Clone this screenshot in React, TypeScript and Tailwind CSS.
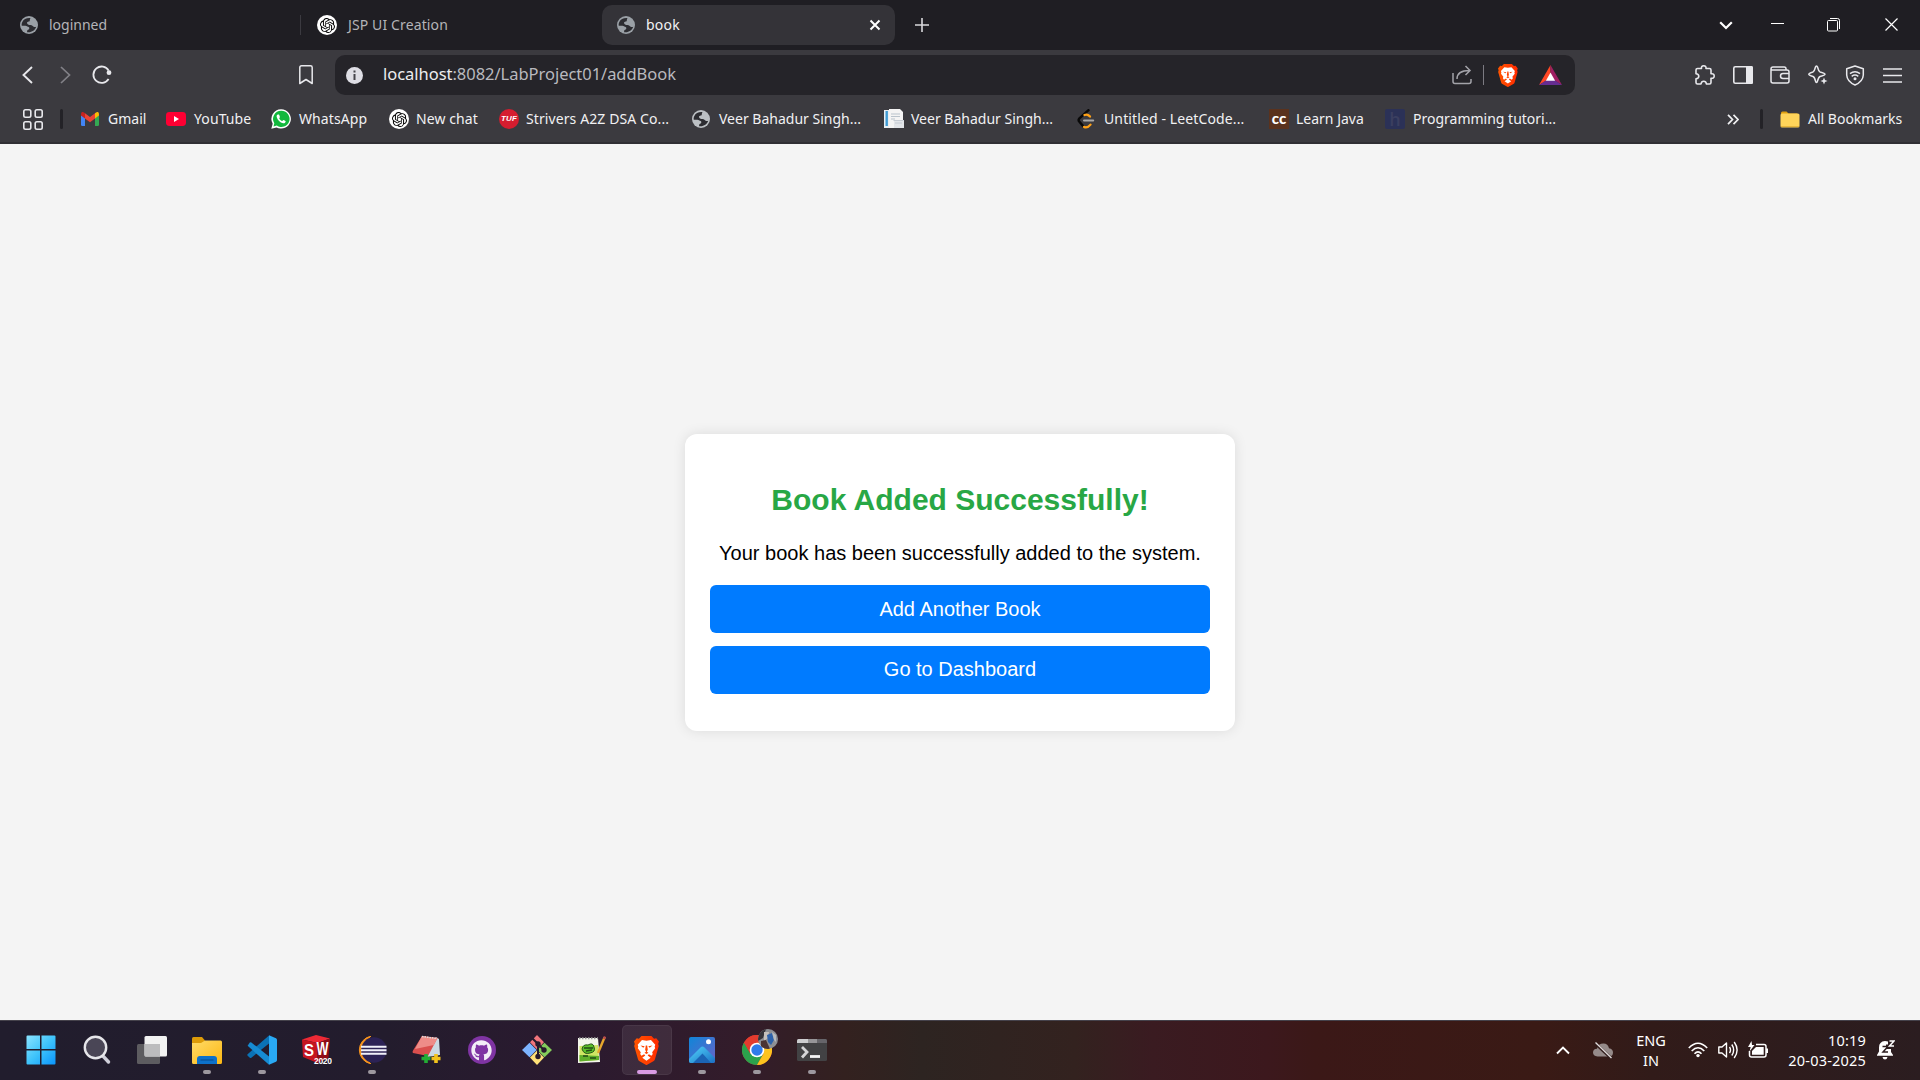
import type { ReactNode } from 'react';
import { SiOpenai } from 'react-icons/si';
import { FaGithub } from 'react-icons/fa';

const Globe = ({ color = '#9aa0a6' }: { color?: string }) => (
  <svg width="18" height="18" viewBox="0 0 18 18">
    <circle cx="9" cy="9" r="9" fill={color} />
    <path d="M10.500 2C6.600 1.700 3.600 3 2.200 6.200C1.600 7.800 1.500 8.800 1.800 9.800H5.400C7 9.800 7.600 11 9 11.200C9.800 12.400 9 13.500 8 13.700C7 14 7 15.400 7.200 16.200C11.500 16.800 15 14.400 16.200 10.800C15 11.500 13.400 10.800 12.400 9.700C11.600 8.700 9.600 9.400 8 8.500C6.400 7.400 6.800 5.800 8.600 5.600C10.600 5.400 9.200 4 10.500 2Z" fill="#2c2c31" />
  </svg>
);

const ChatIcon = () => (
  <span className="flex size-5 items-center justify-center rounded-full bg-white text-black">
    <SiOpenai size={15} />
  </span>
);

const Gmail = () => (
  <svg width="18" height="14" viewBox="0 0 18 14">
    <path d="M0 3v9.7Q0 14 1.3 14H4V6Z" fill="#4285f4" />
    <path d="M18 3v9.7Q18 14 16.7 14H14V6Z" fill="#34a853" />
    <path d="M14 1.2 15 .4Q18-1 18 2.2V3.4L14 6.5Z" fill="#fbbc04" />
    <path d="M4 1.2 3 .4Q0-1 0 2.2V3.4L4 6.5Z" fill="#c5221f" />
    <path d="M4 1.2 9 5 14 1.2V6.5L9 10.2 4 6.5Z" fill="#ea4335" />
  </svg>
);

const YouTube = () => (
  <svg width="20" height="14" viewBox="0 0 20 14">
    <rect width="20" height="14" rx="3.4" fill="#ff0033" />
    <path d="M8 4.1v5.8L13 7Z" fill="#fff" />
  </svg>
);

const WhatsApp = () => (
  <svg width="20" height="20" viewBox="0 0 20 20">
    <path d="M10.2.2a9.7 9.7 0 0 0-8.5 14.5L.3 19.8l5.2-1.4A9.7 9.7 0 1 0 10.2.2Z" fill="#fff" />
    <path d="M10.2 1.8a8.1 8.1 0 0 0-6.9 12.4l-.8 3.2 3.3-.9A8.1 8.1 0 1 0 10.2 1.8Z" fill="#12b83d" />
    <path d="M7 5.4C6 5.6 5.4 6.6 5.7 8c.8 3.2 3.4 5.6 6.4 6.2 1.4.2 2.5-.6 2.6-2 0-.3-2.1-1.4-2.4-1.2l-1 1.1c-1.4-.5-2.5-1.5-3.1-2.9l.7-.9c.2-.3-.7-2.5-.9-2.8Z" fill="#fff" />
  </svg>
);

const Tuf = () => (
  <span className="flex size-5 items-center justify-center rounded-full bg-[#d51d2f]">
    <span className="font-['Liberation_Sans',sans-serif] text-[8px] leading-none font-bold text-white italic">TUF</span>
  </span>
);

const Doc = () => (
  <svg width="20" height="20" viewBox="0 0 20 20">
    <path d="M0 1h5v18H0Z" fill="#e8eef2" />
    <path d="M1.5 2h2.4v15H1.5Z" fill="#3f9bd4" />
    <path d="M5 0h11l3 3v16H5Z" fill="#f4f4f4" />
    <path d="M7 5h9M7 7.5h9M7 10h4" stroke="#b9c3cc" />
    <path d="M10 11h10v8H10Z" fill="#e2e5e9" />
    <path d="M9.5 11.5h10M11 14h7" stroke="#c4cad2" />
  </svg>
);

const LeetCode = () => (
  <svg width="18" height="20" viewBox="0 0 18 20" fill="none" strokeLinecap="round">
    <path d="M11.5 1.2 2.2 9.5Q1 11 2.2 12.6L6.4 17.4" stroke="#080808" strokeWidth="2.4" />
    <path d="M7.5 6Q10.5 4.6 13 7.6" stroke="#ffa116" strokeWidth="2.3" />
    <path d="M7 17.9Q10.4 19.5 13.5 15.6" stroke="#ffa116" strokeWidth="2.3" />
    <path d="M7 11.6H16.2" stroke="#a9a9a9" strokeWidth="2" />
  </svg>
);

const Cc = () => (
  <span className="flex size-5 items-center justify-center bg-[#5a321d]">
    <span className="pb-[2px] font-['Lato',sans-serif] text-[15px] leading-none font-black text-white">cc</span>
  </span>
);

const Hyper = () => (
  <span className="flex size-5 items-center justify-center rounded-[2px] bg-[#2b3157]">
    <span className="font-['Open_Sans',sans-serif] text-[18px] leading-none font-semibold text-[#3b3f60]">h</span>
  </span>
);

const Folder = () => (
  <svg width="20" height="17" viewBox="0 0 20 17">
    <path d="M1 2Q1 .5 2.5.5H6.5L8.5 2.5H17V6H1Z" fill="#e0a010" />
    <rect x="0.5" y="2.5" width="19" height="14" rx="1.6" fill="#ffd45a" />
    <path d="M1 15.5H19" stroke="#e7b53a" />
  </svg>
);

const Triangle = () => (
  <svg width="23" height="20" viewBox="0 0 23 20">
    <path d="M11.5 0 0 20 11.5 13Z" fill="#ff4724" />
    <path d="M11.5 0 23 20 11.5 13Z" fill="#9e1f63" />
    <path d="M0 20H23L11.5 12.5Z" fill="#662d91" />
    <path d="M11.5 7.6 6.9 15.7H16.1Z" fill="#fff" />
  </svg>
);

const Lion = ({ h, id }: { h: number; id: string }) => (
  <svg height={h} width={h * 0.86} viewBox="0 0 25 29">
    <defs>
      <linearGradient id={id} x1="0" x2="1">
        <stop offset="0" stopColor="#ff5500" />
        <stop offset="1" stopColor="#ff2a00" />
      </linearGradient>
    </defs>
    <path d="M7.5 0h10l2.6 2.6 2.2-.3L25 5.6l-.8 2.4.6 2-3.8 13.2q-.4 1.3-1.6 2L12.5 29.2 5.6 25.2Q4.4 24.500 4 23.200L.2 10l.6-2L0 5.600 2.700 2.300l2.200.3Z" fill={`url(#${id})`} />
    <path d="M12.500 4.800 17 4l4.300 4.800-.6 2 .5 1.500-3 3.900 .6 1.800-1.300 1.800-2.600-1.500-1.200 1.200 3 2.200-4.200 3-4.200-3 3-2.200-1.200-1.200-2.600 1.500-1.300-1.800.6-1.800-3-3.900.5-1.500-.6-2L8 4Z" fill="#fff" />
    <path d="M6.500 9.600 10.700 10.300 9.300 11.700ZM18.500 9.600 14.300 10.300 15.700 11.700ZM11.800 9.500h1.400l.6 4.300-.9 2 1.600 1-2 1.100-2-1.100 1.600-1-.9-2Z" fill="#ff4500" />
  </svg>
);

const bookmarks: { label: string; icon: ReactNode; slot: string }[] = [
  { label: 'Gmail', icon: <Gmail />, slot: 'w-[86px] gap-2' },
  { label: 'YouTube', icon: <YouTube />, slot: 'w-[105px] gap-2 tracking-[0.1px]' },
  { label: 'WhatsApp', icon: <WhatsApp />, slot: 'w-[118px] gap-2 tracking-[0.1px]' },
  { label: 'New chat', icon: <ChatIcon />, slot: 'w-[110px] gap-[7px] tracking-[0.1px]' },
  { label: 'Strivers A2Z DSA Co...', icon: <Tuf />, slot: 'w-[192px] gap-[7px] tracking-[0.1px]' },
  { label: 'Veer Bahadur Singh...', icon: <Globe color="#bcc0c4" />, slot: 'w-[193px] gap-2' },
  { label: 'Veer Bahadur Singh...', icon: <Doc />, slot: 'w-[192px] gap-[7px]' },
  { label: 'Untitled - LeetCode...', icon: <LeetCode />, slot: 'w-[193px] gap-2 tracking-[0.12px]' },
  { label: 'Learn Java', icon: <Cc />, slot: 'w-[116px] gap-[7px]' },
  { label: 'Programming tutori...', icon: <Hyper />, slot: 'w-[180px] gap-2' },
];

const TabStrip = () => (
  <header className="flex h-[50px] items-center bg-[#1f1e23] text-[14px] text-[#b4b4b8]">
    <div className="flex w-[300px] items-center gap-[11px] pl-5"><Globe /><span className="pb-[2px]">loginned</span></div>
    <div className="h-5 w-px bg-[#3b3a40]" />
    <div className="flex w-[301px] items-center gap-[11px] pl-4"><ChatIcon /><span className="pb-[2px] tracking-[0.12px]">JSP UI Creation</span></div>
    <div className="flex h-10 w-[293px] items-center rounded-[10px] bg-[#343338] pr-[14px] pl-[15px] text-[#f2f2f4]">
      <Globe />
      <span className="ml-[11px] flex-1 pb-[2px] tracking-[0.2px]">book</span>
      <svg width="12" height="12" viewBox="0 0 12 12"><path d="M1.500 1.500 10.500 10.500M10.500 1.500 1.500 10.500" stroke="#fff" strokeWidth="2" /></svg>
    </div>
    <svg className="ml-5" width="14" height="14" viewBox="0 0 14 14"><path d="M7 0V14M0 7H14" stroke="#d9d9dc" strokeWidth="1.600" /></svg>
    <div className="ml-auto flex items-center">
      <svg className="mr-[38px]" width="14" height="9" viewBox="0 0 14 9"><path d="M1.200 1.200 7 7 12.800 1.200" fill="none" stroke="#fff" strokeWidth="2.200" /></svg>
      <svg className="mr-[43px]" width="13" height="14" viewBox="0 0 13 14"><path d="M0 5.500H13" stroke="#fff" /></svg>
      <svg className="mr-[45px]" width="13" height="14" viewBox="0 0 13 14" fill="none" stroke="#fff"><rect x=".5" y="2.500" width="10" height="10.500" rx="1" /><path d="M3 .5H10.500Q12.500 .5 12.500 2.500V11" /></svg>
      <svg className="mr-[22px] mb-px" width="13" height="13" viewBox="0 0 13 13"><path d="M.5.5 12.500 12.500M12.500.5.5 12.500" stroke="#fff" strokeWidth="1.200" /></svg>
    </div>
  </header>
);

const Toolbar = () => (
  <div className="flex h-[50px] items-center text-[#e8e8ec]">
    <svg className="ml-[22px]" width="11" height="18" viewBox="0 0 11 18" fill="none" stroke="currentColor" strokeWidth="1.900"><path d="M10 1 1.500 9 10 17" /></svg>
    <svg className="ml-[27px]" width="11" height="18" viewBox="0 0 11 18" fill="none" stroke="#828187" strokeWidth="1.700"><path d="M1 1 9.500 9 1 17" /></svg>
    <svg className="ml-[21px]" width="20" height="20" viewBox="0 0 20 20" fill="none" stroke="currentColor" strokeWidth="1.800"><path d="M16.600 14A8.200 8.200 0 1 1 16.700 5.600" /><circle cx="17" cy="7.700" r="2.400" fill="currentColor" stroke="none" /></svg>
    <svg className="ml-[187px]" width="14" height="20" viewBox="0 0 14 20" fill="none" stroke="currentColor" strokeWidth="1.500"><path d="M.8 2.500Q.8.800 2.500.800H11.500Q13.200.800 13.200 2.500V18.500L7 14.500.8 18.500Z" strokeLinejoin="round" /></svg>
    <div className="ml-[22px] flex h-10 w-[1240px] items-center rounded-[10px] bg-[#252429]">
      <svg className="ml-[11px]" width="17" height="17" viewBox="0 0 17 17"><circle cx="8.500" cy="8.500" r="8.500" fill="#dedee5" /><path d="M8.500 3.500V5.500M8.500 7V13" stroke="#45444b" strokeWidth="2" /></svg>
      <span className="ml-[20px] flex-1 pb-px text-[16.5px] tracking-[-0.03px] text-[#b9b9be]"><span className="text-[#ededf0]">localhost</span>:8082/LabProject01/addBook</span>
      <svg width="20" height="20" viewBox="0 0 20 20" fill="none" stroke="#a3a3a9" strokeWidth="1.500"><path d="M1 8V16.500Q1 18.500 3 18.500H17Q19 18.500 19 16.500V14M5 14Q5 5.500 17.500 5.500M13.500 1 18 5.500 13.500 10" /></svg>
      <div className="ml-[11px] h-5 w-px bg-[#7c7b82]" />
      <span className="ml-[14px]"><Lion h={23} id="lion-small" /></span>
      <span className="mr-[13px] ml-[21px]"><Triangle /></span>
    </div>
    <div className="mr-[18px] ml-auto flex items-center gap-[17.6px]">
      <svg width="20" height="20" viewBox="0 0 20 20" fill="none" stroke="currentColor" strokeWidth="1.600" strokeLinejoin="round"><path d="M1 5Q1 3.500 2.500 3.500H6.500Q6 .8 8.700 .8T11 3.500H14.500Q16 3.500 16 5V8.800Q19.200 8.300 19.200 11T16 13.200V17.500Q16 19 14.500 19H11.500Q11 16.200 8.700 16.200T6 19H2.500Q1 19 1 17.500V13.800Q3.800 13.500 3.800 11.200T1 8.700Z" /></svg>
      <svg width="20" height="18" viewBox="0 0 20 18"><rect x=".8" y=".8" width="18.400" height="16.400" rx="1.500" fill="none" stroke="currentColor" strokeWidth="1.600" /><path d="M13 0H18.500Q20 0 20 1.500V16.500Q20 18 18.500 18H13Z" fill="currentColor" /></svg>
      <svg width="20" height="18" viewBox="0 0 20 18" fill="none" stroke="currentColor" strokeWidth="1.500"><path d="M16 4V2.800Q16 1 14.200 1H3Q1 1 1 3V15Q1 17 3 17H17Q19 17 19 15V6Q19 4 17 4H3Q1 4 1 3M19 7.500H13Q10.500 7.500 10.500 10T13 12.500H19" /></svg>
      <svg width="20" height="20" viewBox="0 0 20 20" fill="none" stroke="currentColor" strokeWidth="1.500" strokeLinejoin="round"><path d="M8.500 1Q9.200 1 9.500 2Q10.500 6 12 7Q17 8.500 17 9.200T12 11.500Q10.700 12 9.500 16Q9.200 17.500 8.500 17.500T7.500 16Q6.500 12 5 11.500Q.8 10 .8 9.200T5 7Q6.500 6 7.500 2Q7.800 1 8.500 1Z" /><path d="M16 12.500 17 15 19.500 16 17 17 16 19.500 15 17 12.500 16 15 15Z" fill="currentColor" stroke="none" /></svg>
      <svg width="20" height="21" viewBox="0 0 20 21" fill="none" stroke="currentColor" strokeWidth="1.500"><path d="M10 1 18.300 3.800V10Q18 16.500 10 20Q2 16.500 1.700 10V3.800Z" strokeLinejoin="round" /><path d="M5 8.700Q10 5 15 8.700M6.700 11.300Q10 8.800 13.300 11.300" /><circle cx="10" cy="13.700" r="1.500" fill="currentColor" stroke="none" /></svg>
      <svg width="19" height="15" viewBox="0 0 19 15"><path d="M0 1H19M0 7.500H19M0 14H19" stroke="currentColor" strokeWidth="1.500" /></svg>
    </div>
  </div>
);

const BookmarkBar = () => (
  <div className="flex h-[42px] items-center text-[14px] text-[#f1f1f3]">
    <svg className="ml-[23px]" width="20" height="21" viewBox="0 0 20 21" fill="none" stroke="#e8e8ec" strokeWidth="1.600"><rect x=".8" y=".8" width="7" height="7.500" rx="1.700" /><rect x="12.200" y=".8" width="7" height="7.500" rx="1.700" /><rect x=".8" y="12.700" width="7" height="7.500" rx="1.700" /><rect x="12.200" y="12.700" width="7" height="7.500" rx="1.700" /></svg>
    <div className="mr-[17px] ml-[17px] h-5 w-[3px] rounded bg-[#232227]" />
    {bookmarks.map((b, i) => (
      <div key={i} className={`flex shrink-0 items-center whitespace-nowrap ${b.slot}`}>
        <span className="flex w-5 justify-center">{b.icon}</span>
        <span className="pb-[2px]">{b.label}</span>
      </div>
    ))}
    <svg className="ml-auto" width="12" height="11" viewBox="0 0 12 11" fill="none" stroke="#f1f1f3" strokeWidth="1.700"><path d="M1 .8 5.500 5.500 1 10.200M6.500 .8 11 5.500 6.500 10.200" /></svg>
    <div className="mr-[17px] ml-[21px] h-5 w-[3px] rounded bg-[#232227]" />
    <Folder />
    <span className="mr-[17px] ml-[8px] w-[95px] pb-[2px] whitespace-nowrap">All Bookmarks</span>
  </div>
);

const Start = () => (
  <svg className="mr-[2px]" width="30" height="30" viewBox="0 0 30 30">
    <defs><linearGradient id="win" x1="0" y1="0" x2="1" y2="1"><stop offset="0" stopColor="#8be4ff" /><stop offset=".5" stopColor="#3fc4fb" /><stop offset="1" stopColor="#0a94fb" /></linearGradient></defs>
    <path d="M1.500.5H14V14H.5V1.500Q.5.500 1.500.5ZM15.500.5H28.500Q29.500.500 29.500 1.500V14H15.500ZM.5 15.500H14V29.500H1.500Q.5 29.500.5 28.500ZM15.500 15.500H29.500V28.500Q29.500 29.500 28.500 29.500H15.500Z" fill="url(#win)" />
  </svg>
);
const Search = () => (
  <svg width="28" height="30" viewBox="0 0 28 30"><path d="M19 20 25.500 27" stroke="#d0d0da" strokeWidth="3.400" strokeLinecap="round" /><circle cx="12.500" cy="12.500" r="10.700" fill="#4a4656" stroke="#e6e6ea" strokeWidth="2.400" /></svg>
);
const Tasks = () => (
  <svg width="30" height="28" viewBox="0 0 30 28"><rect y="8" width="23" height="20" rx="1.500" fill="#5d5c60" /><rect x="7.500" width="22.500" height="20.500" rx="1.500" fill="#f2f2f2" /><path d="M7.500 8H23V20.500H9Q7.500 20.500 7.500 19Z" fill="#bcbcbe" /></svg>
);
const Explorer = () => (
  <svg width="30" height="27" viewBox="0 0 30 27">
    <defs><linearGradient id="fold" x1="0" y1="0" x2="1" y2="1"><stop offset="0" stopColor="#ffdb68" /><stop offset="1" stopColor="#fdb813" /></linearGradient></defs>
    <path d="M0 1.500Q0 0 1.500 0H10L13 3.500V8H0Z" fill="#dd9b08" /><path d="M0 6H9L13 3.500H28.500Q30 3.500 30 5V25.500Q30 27 28.500 27H1.500Q0 27 0 25.500Z" fill="url(#fold)" />
    <path d="M5 27V22Q5 19 8 19H22Q25 19 25 22V27Z" fill="#0d71ca" /><path d="M8.500 23H21.500" stroke="#064a8c" />
  </svg>
);
const VsCode = () => (
  <svg width="30" height="30" viewBox="0 0 30 30">
    <path d="M.6 19.200 22 .4V8.500L4 23Q3.400 23.200 2.800 22.700L.7 20.800Q0 20 .6 19.200Z" fill="#0b72b5" />
    <path d="M.6 10.800 2.800 7.500Q3.600 6.900 4.400 7.500L22 21.500V29.700Z" fill="#168bd2" />
    <path d="M22 .3 29 3.300Q30 4 30 5V25Q30 26 29 26.700L22 29.700Z" fill="#29a9f4" />
  </svg>
);
const SolidWorks = () => (
  <svg width="30" height="30" viewBox="0 0 30 30">
    <path d="M0 4.500 14 0 28 3.500 15.500 8Z" fill="#ed2935" /><path d="M0 4.500 15.500 8V28L1 22Z" fill="#c51520" /><path d="M15.500 8 28 3.500 26.500 23 15.500 28Z" fill="#8f0c16" />
    <g fill="#fff" fontFamily="Liberation Sans, sans-serif" fontWeight="700"><text x="2" y="21" fontSize="17" textLength="10" lengthAdjust="spacingAndGlyphs">S</text><text x="14.500" y="20" fontSize="18" textLength="12" lengthAdjust="spacingAndGlyphs">W</text><text x="12" y="28.500" fontSize="8.500" textLength="18">2020</text></g>
  </svg>
);
const Eclipse = () => (
  <svg width="30" height="28" viewBox="0 0 30 28"><path d="M14 .2A14 14 0 0 0 14 27.800A16 16 0 0 1 14 .2Z" fill="#f7941e" stroke="#f7941e" strokeWidth="1" /><circle cx="17" cy="14" r="12.800" fill="#2c2255" /><path d="M4 10.700H29.500M4 14.200H29.500M4 17.700H29.500" stroke="#f1f1fa" strokeWidth="2" /></svg>
);
const Notebook = () => (
  <svg width="30" height="30" viewBox="0 0 30 30"><path d="M24 2 27 4 28 20 15 22Z" fill="#cbd9e2" /><path d="M10 1 25.500 3 16 21 1 18Q0 17 1 15.500Z" fill="#da4f4e" /><path d="M10 1 25.500 3 22 10 3 14Z" fill="#ee8c88" /><path d="M10 1.500 25 3.500" stroke="#ddd" strokeWidth="1.500" strokeDasharray="1.500 1" /><path d="M14 19V28M9.500 23.500H18.500" stroke="#23ad34" strokeWidth="3.600" /><path d="M24 19V28M19.500 23.500H28.500" stroke="#f2c31c" strokeWidth="3.600" /></svg>
);
const GitHub = () => <span className="flex size-7 items-center justify-center rounded-full bg-[#7f34a3] text-[#f3eef7]"><FaGithub size={21} /></span>;
const Git = () => (
  <svg width="30" height="30" viewBox="0 0 30 30"><path d="M15 0 22 7.300 15 14.600 8 7.300Z" fill="#f1757c" /><path d="M7.500 7.800 14.700 15 7.500 22.300 0 15Z" fill="#7db4ff" /><path d="M22.500 7.800 30 15 22.500 22.300 15.300 15Z" fill="#84cc5b" /><path d="M15 15.400 22 22.600 15 30 8 22.600Z" fill="#ffe178" /><path d="M10.500 3.500 16 9V22M16 9 22 15" stroke="#271a2c" strokeWidth="2" fill="none" /><circle cx="16" cy="9" r="2.700" fill="#271a2c" /><circle cx="22" cy="15" r="2.700" fill="#271a2c" /><circle cx="16" cy="21.500" r="2.700" fill="#271a2c" /></svg>
);
const Notepad = () => (
  <svg width="28" height="28" viewBox="0 0 28 28"><path d="M0 2H20L22 26 0 27Z" fill="#f4f6ec" /><path d="M1.500 10 20 9 21 24 1.500 25.500Z" fill="#cfe564" /><path d="M1.500 19 21 20V24L1.500 25.500Z" fill="#5fae2b" /><path d="M1 2.200H20" stroke="#999" strokeWidth="2" strokeDasharray="1.500 1.500" /><path d="M4 13Q5 8 10 9Q15 6 16 11Q18 16 12 17Q6 19 4 13Z" fill="#5bbf29" stroke="#28571b" /><path d="M6 12H15M8 15 14 14M5 20H10M12 22H18" stroke="#234a16" strokeWidth="1.300" /><path d="M26.500 1.500 20 17" stroke="#e6a62c" strokeWidth="2.400" /><path d="M27 .5 26 3" stroke="#b94b4b" strokeWidth="2.400" /></svg>
);
const Photos = () => (
  <svg width="26" height="26" viewBox="0 0 26 26">
    <defs><linearGradient id="sky" x1="0" y1="0" x2="1" y2="1"><stop offset="0" stopColor="#0f86d8" /><stop offset="1" stopColor="#6a62c8" /></linearGradient><linearGradient id="hill" x1="0" y1="0" x2="1" y2="1"><stop offset="0" stopColor="#52d6fc" /><stop offset="1" stopColor="#1a6fc4" /></linearGradient></defs>
    <rect width="26" height="26" rx="2" fill="url(#sky)" /><path d="M0 22 11.500 10.500Q13.500 8.500 15.500 10.500L26 21V24Q26 26 24 26H2Q0 26 0 24Z" fill="url(#hill)" /><path d="M13.500 16.500 22 26H4Z" fill="#1b64b5" /><circle cx="19.500" cy="4.800" r="2.500" fill="#fff" />
  </svg>
);
const Chrome = () => (
  <span className="relative flex">
    <svg width="30" height="30" viewBox="0 0 30 30"><circle cx="15" cy="15" r="15" fill="#e33b2e" /><path d="M2 7.500A15 15 0 0 0 15 30L21.500 18.700 8.500 18.700Z" fill="#2ba24c" /><path d="M15 30A15 15 0 0 0 28 7.500H15L21.500 18.700Z" fill="#fcc31e" /><path d="M2 7.500A15 15 0 0 1 28 7.500H15L8.500 18.700Z" fill="#e33b2e" /><circle cx="15" cy="15" r="7.300" fill="#fff" /><circle cx="15" cy="15" r="5.700" fill="#2f7bea" /></svg>
    <svg className="absolute -top-[6px] left-4" width="20" height="20" viewBox="0 0 20 20"><defs><clipPath id="face"><circle cx="10" cy="10" r="10" /></clipPath></defs><g clipPath="url(#face)"><path d="M0 0H20V20H0Z" fill="#8d8f94" /><path d="M0 0H8L5 9 0 12Z" fill="#353238" /><path d="M6 3H11L10 9 6 12Z" fill="#c4c0bc" /><path d="M9 6 14 4 16 11 13 16 10 13Z" fill="#2d62ab" /><path d="M14 3 18 6 18 13 16 11Z" fill="#b7babd" /><path d="M3 12 8 11 12 20H3Z" fill="#4b3433" /></g></svg>
  </span>
);
const Terminal = () => (
  <svg width="30" height="22" viewBox="0 0 30 22"><rect width="30" height="22" rx="1.500" fill="#424244" /><path d="M1.500 0H11V4H0V1.500Q0 0 1.500 0Z" fill="#cdcdcf" /><path d="M11 0H20V4H11Z" fill="#969598" /><path d="M20 0H28.500Q30 0 30 1.500V4H20Z" fill="#66656a" /><path d="M5 8 10 13 5 18.500" fill="none" stroke="#d5d5d7" strokeWidth="2.800" /><path d="M13 17.500H23" stroke="#f5f5f5" strokeWidth="2.800" /></svg>
);

const apps: { icon: ReactNode; open?: boolean; active?: boolean }[] = [
  { icon: <Start /> }, { icon: <Search /> }, { icon: <Tasks /> }, { icon: <Explorer />, open: true }, { icon: <VsCode />, open: true },
  { icon: <SolidWorks /> }, { icon: <Eclipse />, open: true }, { icon: <Notebook /> }, { icon: <GitHub /> }, { icon: <Git /> },
  { icon: <Notepad /> }, { icon: <Lion h={29} id="lion-large" />, active: true }, { icon: <Photos />, open: true }, { icon: <Chrome />, open: true }, { icon: <Terminal />, open: true },
];

const Taskbar = () => (
  <footer className="flex h-[60px] items-center border-t border-[#45424b] bg-linear-[90deg,#211d2d_0%,#231c2d_20%,#2b1a2f_30%,#331c2a_39%,#33211f_44%,#2d2421_48%,#33221f_56%,#3a1b21_60%,#3c181d_66%,#3b1817_68.500%,#3a1a15_80%,#311b19_86%,#2b1d20_100%] text-white">
    <div className="flex items-center pl-[14px]">
      {apps.map((a, i) => (
        <div key={i} className="flex h-[57px] w-[55px] items-center justify-center pb-px">
          <div className={`relative flex h-[50px] w-[50px] items-center justify-center rounded-[5px] ${a.active ? 'border border-white/5 bg-white/8' : ''}`}>
            {a.icon}
            {a.open && <span className="absolute bottom-[1px] h-1 w-2 rounded-full bg-[#9d989f]" />}
            {a.active && <span className="absolute bottom-0 h-1 w-5 rounded-full bg-[#d99be4]" />}
          </div>
        </div>
      ))}
    </div>
    <div className="ml-auto flex items-center pb-px">
      <svg width="14" height="9" viewBox="0 0 14 9"><path d="M1 7.500 7 1.500 13 7.500" fill="none" stroke="#fff" strokeWidth="1.900" /></svg>
      <svg className="ml-[23px]" width="20" height="17" viewBox="0 0 20 17"><path d="M4.500 14.500Q0 14 0 10.500Q0 7 4 6.800Q5 1.500 10.500 1.500Q15 1.500 16 6.300Q20 7 20 10.500Q20 14.500 16 14.500Z" fill="#958a89" /><path d="M1.800 1 18.500 16.500" stroke="#311c1b" strokeWidth="3" /><path d="M2.500.5 18.500 16" stroke="#e3dddd" strokeWidth="1.300" /></svg>
      <div className="ml-[22px] w-8 pb-px text-center text-[14.5px] leading-5">ENG<br />IN</div>
      <svg className="ml-[21px]" width="20" height="16" viewBox="0 0 20 16" fill="none" stroke="#fff" strokeWidth="1.600"><path d="M.8 6Q10-3.500 19.200 6M3.700 9Q10 2.500 16.300 9M6.500 11.800Q10 8 13.500 11.800" /><circle cx="10" cy="13.600" r="1.700" fill="#fff" stroke="none" /></svg>
      <svg className="ml-[10px]" width="20" height="18" viewBox="0 0 20 18" fill="none" stroke="#fff" strokeWidth="1.400"><path d="M.8 6H4L8.500 2V16L4 12H.8ZM11.500 6Q13.500 9 11.500 12M13.800 3.500Q17.500 9 13.800 14.500M16.200 1Q22 9 16.200 17" strokeLinejoin="round" /></svg>
      <svg className="ml-[10px]" width="20" height="18" viewBox="0 0 20 18"><path d="M8 3.500H16Q18 3.500 18 5.500V14Q18 16 16 16H3.500Q1.500 16 1.500 14V10" fill="none" stroke="#fff" strokeWidth="1.500" /><path d="M8 6H15.700V13.700H4V10Z" fill="#fff" /><path d="M18 7.500H20V12H18Z" fill="#fff" /><path d="M3.500 0 0 6H2.700L1.500 10.500 6.500 4H4Z" fill="#fff" /></svg>
      <div className="ml-[17px] w-[81px] pb-px text-right text-[14.5px] leading-5 tracking-[0.2px] whitespace-nowrap">10:19<br />20-03-2025</div>
      <svg className="mr-[25px] ml-[11px]" width="18" height="20" viewBox="0 0 18 20"><path d="M8 1Q2 1.500 2 7.500V11.500L0 15V15.800H16V15L14 12V9H9V4.500H11V1.500ZM5.500 17H10.500Q10 19.500 8 19.500T5.500 17Z" fill="#fff" /><path d="M5.500 6.500H11L6 12H11" fill="none" stroke="#2c1d1f" strokeWidth="1.500" /><path d="M12.500 1H17L12.500 6H17" fill="none" stroke="#fff" strokeWidth="1.500" /></svg>
    </div>
  </footer>
);

export default function App() {
  return (
    <div className="flex h-[1080px] w-[1920px] flex-col overflow-hidden font-['Noto_Sans',sans-serif]">
      <TabStrip />
      <div className="h-[94px] shrink-0 border-b-2 border-[#302f34] bg-[#3b3a3f]">
        <Toolbar />
        <div className="-mt-[2px]"><BookmarkBar /></div>
      </div>
      <main className="flex flex-1 items-center justify-center bg-[#f4f4f4] font-['Liberation_Sans',Arial,sans-serif]">
        <section className="mt-px h-[297px] w-[550px] rounded-xl bg-white px-[25px] text-center shadow-[0_0_12.5px_rgba(0,0,0,0.1)]">
          <h1 className="pt-[46px] text-[30px] leading-10 font-bold text-[#28a745]">Book Added Successfully!</h1>
          <p className="mt-5 text-[20px] leading-[26px] text-black">Your book has been successfully added to the system.</p>
          <a className="mt-[19px] block h-12 rounded-[6px] bg-[#007bff] text-[20px] leading-12 text-white">Add Another Book</a>
          <a className="mt-[13px] block h-12 rounded-[6px] bg-[#007bff] text-[20px] leading-[46px] text-white">Go to Dashboard</a>
        </section>
      </main>
      <Taskbar />
    </div>
  );
}
